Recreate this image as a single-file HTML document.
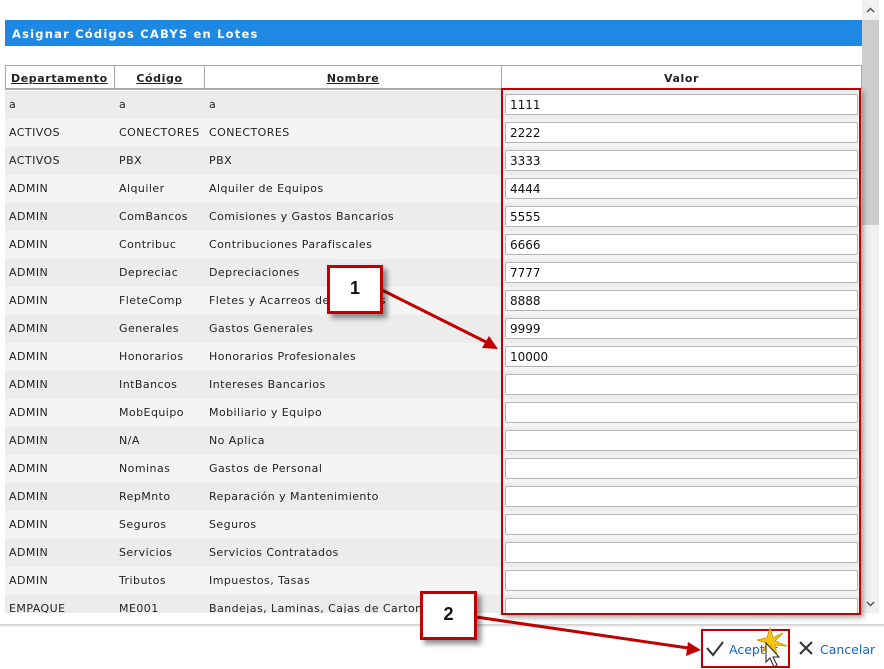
<!DOCTYPE html>
<html><head><meta charset="utf-8"><style>
*{margin:0;padding:0;box-sizing:border-box}
body{width:884px;height:669px;background:#fff;position:relative;overflow:hidden;font-family:"DejaVu Sans","Liberation Sans",sans-serif;font-size:11px;color:#222}
.hdr{position:absolute;left:5px;top:20px;width:857px;height:26px;background:#1e88e5;color:#fff;font-weight:bold;font-size:11.5px;letter-spacing:1.2px;padding:7px 0 0 7px}
.clip{position:absolute;left:5px;top:65px;width:857px;height:548px;overflow:hidden}
.th{position:absolute;top:0;height:25px;border:1px solid #aaa;border-bottom:2px solid #aaa;font-weight:bold;text-decoration:underline;text-align:center;padding-top:6px;font-size:11px;letter-spacing:.6px;background:#fff}
.row{position:absolute;left:0;width:857px;height:28px}
.row span{position:absolute;top:7px;letter-spacing:.45px}
.row .in{position:absolute;left:500px;top:3px;width:353px;height:21px;background:#fff;border:1px solid #b5b5b5;border-radius:2px;padding:3px 0 0 4px;font-size:12px;color:#111}
.sb{position:absolute;left:862px;top:0;width:17px;height:613px;background:#f0f0f0}
.thumb{position:absolute;left:862px;top:20px;width:17px;height:205px;background:#cdcdcd}
.line{position:absolute;left:0;top:624px;width:884px;height:3px;background:linear-gradient(#ccc,#f4f4f4)}
.box{position:absolute;background:#fff;border:3px solid #c00000;box-shadow:4px 4px 5px rgba(0,0,0,.45);font:bold 18px "Liberation Sans",sans-serif;text-align:center;padding-top:10px;color:#111}
</style></head><body>
<div class="hdr">Asignar Códigos CABYS en Lotes</div>
<div class="clip">
<div class="th" style="left:0;width:110px;text-align:left;padding-left:5px">Departamento</div>
<div class="th" style="left:109px;width:91px">Código</div>
<div class="th" style="left:199px;width:298px">Nombre</div>
<div class="th" style="left:496px;width:361px;text-decoration:none">Valor</div>
<div id="rows"></div>
</div>
<script>
var d=[["a","a","a","1111"],["ACTIVOS","CONECTORES","CONECTORES","2222"],["ACTIVOS","PBX","PBX","3333"],["ADMIN","Alquiler","Alquiler de Equipos","4444"],["ADMIN","ComBancos","Comisiones y Gastos Bancarios","5555"],["ADMIN","Contribuc","Contribuciones Parafiscales","6666"],["ADMIN","Depreciac","Depreciaciones","7777"],["ADMIN","FleteComp","Fletes y Acarreos de Compras","8888"],["ADMIN","Generales","Gastos Generales","9999"],["ADMIN","Honorarios","Honorarios Profesionales","10000"],["ADMIN","IntBancos","Intereses Bancarios",""],["ADMIN","MobEquipo","Mobiliario y Equipo",""],["ADMIN","N/A","No Aplica",""],["ADMIN","Nominas","Gastos de Personal",""],["ADMIN","RepMnto","Reparación y Mantenimiento",""],["ADMIN","Seguros","Seguros",""],["ADMIN","Servicios","Servicios Contratados",""],["ADMIN","Tributos","Impuestos, Tasas",""],["EMPAQUE","ME001","Bandejas, Laminas, Cajas de Carton",""]];
var h="";d.forEach(function(r,i){h+='<div class="row" style="top:'+(26+i*28)+'px;background:'+(i%2?'#f4f4f4':'#ececec')+'"><span style="left:4px">'+r[0]+'</span><span style="left:114px">'+r[1]+'</span><span style="left:204px">'+r[2]+'</span><div class="in">'+r[3]+'</div></div>'});
document.getElementById("rows").innerHTML=h;
</script>
<div class="sb"></div><div class="thumb"></div>
<svg style="position:absolute;left:0;top:0" width="884" height="669">
<path d="M867 12 L870.5 8.5 L874 12" stroke="#555" stroke-width="1.5" fill="none"/>
<path d="M867 602 L870.5 605.5 L874 602" stroke="#555" stroke-width="1.5" fill="none"/>
</svg>
<div style="position:absolute;left:501px;top:88px;width:360px;height:527px;border:2px solid #c00000;box-shadow:3px 3px 5px rgba(0,0,0,.3)"></div>
<div class="line"></div>
<div style="position:absolute;left:701px;top:629px;width:89px;height:39px;border:2px solid #c00000"></div>
<svg style="position:absolute;left:0;top:0" width="884" height="669">
<path d="M707 648 L713 655 L723 642" stroke="#333" stroke-width="2" fill="none"/>
<text x="729" y="654" font-family="DejaVu Sans,sans-serif" font-size="12.5" fill="#1565c0">Aceptar</text>
<path d="M800 642 L812 654 M812 642 L800 654" stroke="#333" stroke-width="2"/>
<text x="820" y="654" font-family="DejaVu Sans,sans-serif" font-size="12.5" fill="#1565c0">Cancelar</text>
<path d="M770 628 L773 638 L783 633 L775 641 L787 646 L775 645 L777 656 L771 646 L762 652 L767 643 L757 640 L767 638 Z" fill="#f5c518" stroke="#d49b00" stroke-width="1"/>
<path d="M766 643 L766 662 L770 658 L774 667 L777 665 L773 657 L779 657 Z" fill="#fff" stroke="#222" stroke-width="1"/>
<line x1="382" y1="290" x2="488" y2="343" stroke="#c00000" stroke-width="3"/>
<path d="M498 349 L482 348 L489 336 Z" fill="#c00000"/>
<line x1="476" y1="617" x2="688" y2="648" stroke="#c00000" stroke-width="3"/>
<path d="M701 650 L686 656 L688 642 Z" fill="#c00000"/>
</svg>
<div class="box" style="left:327px;top:265px;width:56px;height:49px">1</div>
<div class="box" style="left:420px;top:591px;width:57px;height:49px">2</div>
</body></html>
